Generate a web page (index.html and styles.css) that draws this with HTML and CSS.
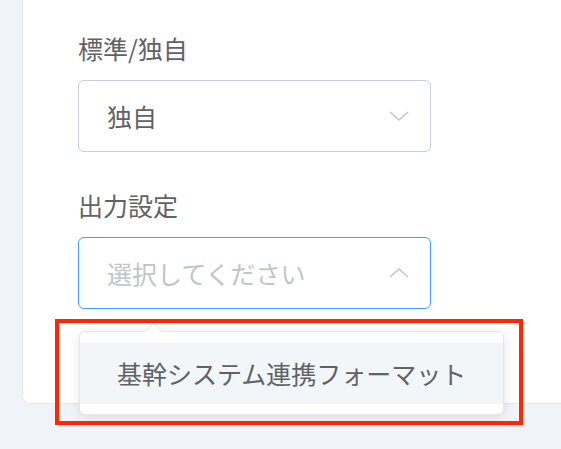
FILE: index.html
```html
<!DOCTYPE html>
<html lang="ja">
<head>
    <meta charset="UTF-8">
    <title>出力設定</title>
    <link rel="stylesheet" href="styles.css">
</head>
<body>
    <div class="card">
        <div class="form-item">
            <label class="form-label">標準/独自</label>
            <div class="select">
                <span class="select-value">独自</span>
                <svg class="select-arrow" width="20" height="10" viewBox="0 0 20 10">
                    <polyline points="1,1 10,9 19,1" fill="none" stroke="#c0c4cc" stroke-width="1.5"/>
                </svg>
            </div>
        </div>
        <div class="form-item">
            <label class="form-label">出力設定</label>
            <div class="select is-focus">
                <span class="select-placeholder">選択してください</span>
                <svg class="select-arrow" width="20" height="10" viewBox="0 0 20 10">
                    <polyline points="1,9 10,1 19,9" fill="none" stroke="#c0c4cc" stroke-width="1.5"/>
                </svg>
            </div>
            <div class="dropdown">
                <div class="dropdown-item">基幹システム連携フォーマット</div>
            </div>
        </div>
    </div>
    <div class="highlight"></div>
</body>
</html>
```

FILE: styles.css
```css
body {
    margin: 0;
    background-color: #f0f4f8;
    font-family: "Noto Sans CJK JP", "Noto Sans", sans-serif;
    color: #606266;
    height: 449px;
    overflow: hidden;
    position: relative;
}
.card {
    margin-left: 22px;
    background-color: white;
    border: 1px solid #e4e7ed;
    border-top: none;
    border-right: none;
    border-radius: 0 0 0 8px;
    padding: 30px 0 94px 55px;
}
.form-item {
    position: relative;
    width: 353px;
}
.form-item + .form-item {
    margin-top: 35px;
}
.form-label {
    display: block;
    font-size: 25px;
    line-height: 36px;
    margin-bottom: 14px;
}
.select {
    height: 70px;
    border: 1px solid #c9cdd4;
    border-radius: 6px;
    display: flex;
    align-items: center;
    justify-content: space-between;
    padding: 0 21px 0 28px;
    font-size: 25px;
}
.select.is-focus {
    border-color: #409eff;
}
.select-placeholder {
    color: #c0c4cc;
}
.dropdown {
    position: absolute;
    top: 144px;
    left: 1px;
    width: 423px;
    background-color: white;
    border: 1px solid #e4e7ed;
    border-radius: 6px;
    box-shadow: 0 2px 12px rgba(0,0,0,0.1);
    padding: 11px 0 10px;
    z-index: 2;
}
.dropdown::before {
    content: "";
    position: absolute;
    top: -7px;
    left: 67px;
    width: 12px;
    height: 12px;
    background-color: white;
    border-top: 1px solid #e4e7ed;
    border-left: 1px solid #e4e7ed;
    transform: rotate(45deg);
}
.dropdown-item {
    height: 61px;
    line-height: 61px;
    padding-left: 37px;
    background-color: #f3f6f9;
    font-size: 25px;
}
.highlight {
    position: absolute;
    left: 55px;
    top: 319px;
    width: 460px;
    height: 98px;
    border: 4px solid #ff2600;
    z-index: 3;
}
```
